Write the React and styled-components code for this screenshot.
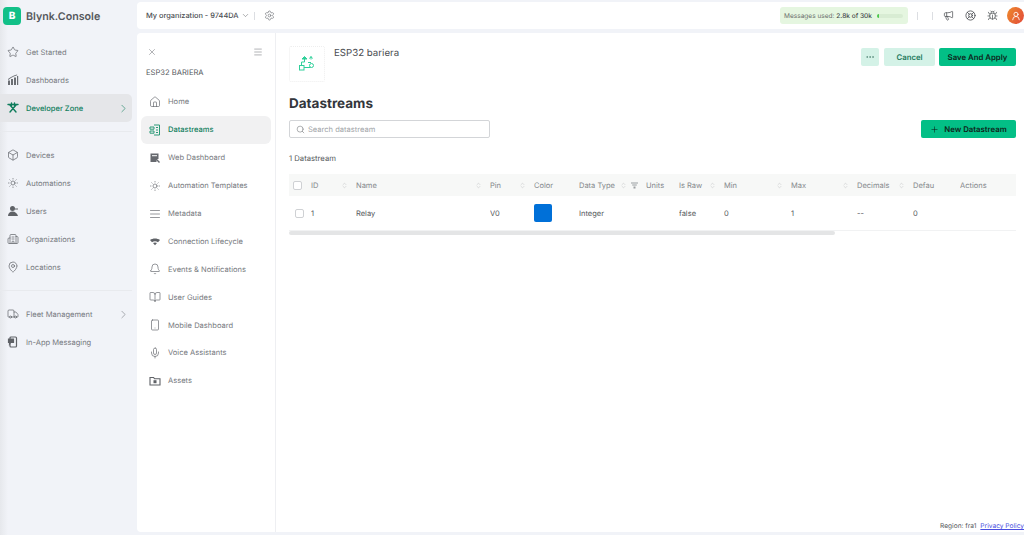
import React from 'react';
import styled, { createGlobalStyle } from 'styled-components';
import {
  Star, Box, SunMedium, Building2, MapPin, Truck, ChevronRight, ChevronDown, Settings, X, Menu, Home,
  Bell, BookOpen, Smartphone, Mic, Search, Plus, ChevronsUpDown, Megaphone, LifeBuoy,
  Bug, UserRound, AlignJustify, Ellipsis
} from 'lucide-react';

const GlobalStyle = createGlobalStyle`
  html, body { margin: 0; padding: 0; height: 100%; overflow: hidden; }
  body {
    font-family: Inter, "Liberation Sans", sans-serif;
    background: #f1f3f8;
    color: #3a3d42;
    text-rendering: geometricPrecision;
  }
  #root { height: 100%; }
  * { box-sizing: border-box; }
`;

const Shell = styled.div`
  display: flex;
  width: 1024px;
  height: 535px;
  background: linear-gradient(90deg, #e6e8ec 0, #f1f3f8 8px);
`;

const Sidebar = styled.aside`
  width: 137px;
  flex-shrink: 0;
  display: flex;
  flex-direction: column;
`;

const Brand = styled.div`
  height: 31px;
  display: flex;
  align-items: center;
  gap: 5px;
  padding-left: 3px;
  padding-top: 1px;
  font-size: 10.7px;
  font-weight: 600;
  color: #55585c;
`;

const Logo = styled.div`
  width: 18px;
  height: 18px;
  border-radius: 4px;
  background: #12c088;
  color: #fff;
  font-size: 10px;
  font-weight: 800;
  display: flex;
  align-items: center;
  justify-content: center;
`;

const SideList = styled.nav`
  display: flex;
  flex-direction: column;
  padding-top: 7px;
`;

const SideItem = styled.div`
  height: 28px;
  width: 132px;
  display: flex;
  align-items: center;
  gap: 7px;
  padding: 0 2px 0 7px;
  border-radius: 0 5px 5px 0;
  font-size: 7.55px;
  color: ${p => (p.$active ? '#0f7d5c' : '#777a80')};
  font-weight: ${p => (p.$active ? 500 : 400)};
  background: ${p => (p.$active ? '#e5e6e9' : 'transparent')};
  svg { flex-shrink: 0; }
  span { flex: 1; }
`;

const SideRule = styled.div`
  height: 1px;
  width: 132px;
  background: #e8eaee;
  margin: ${p => p.$margin};
`;

const Right = styled.div`
  flex: 1;
  min-width: 0;
  display: flex;
  flex-direction: column;
`;

const TopBar = styled.header`
  height: 27px;
  margin-top: 2px;
  background: #fff;
  border-radius: 4px 0 0 4px;
  display: flex;
  align-items: center;
  padding-left: 9px;
  font-size: 7.4px;
  color: #4b4e53;
`;

const OrgName = styled.div`
  display: flex;
  align-items: center;
  gap: 2px;
  font-weight: 500;
`;

const TopTick = styled.div`
  width: 1px;
  height: 8px;
  background: #dcdee2;
  margin: ${p => p.$margin};
`;

const Usage = styled.div`
  width: 128px;
  height: 17px;
  margin-left: auto;
  border-radius: 3px;
  background: #e5f6e0;
  display: flex;
  align-items: center;
  padding: 0 5px 0 4px;
  font-size: 6.55px;
  color: #6a6e6c;
  white-space: pre;
  b { font-weight: 500; color: #44474a; }
`;

const UsageTrack = styled.div`
  width: 26px;
  height: 4px;
  margin-left: auto;
  background: #d8ecd3;
  border-radius: 2px;
  overflow: hidden;
  i { display: block; height: 100%; background: #4cc94c; }
`;

const TopIcons = styled.div`
  display: flex;
  align-items: center;
  gap: 11px;
  margin-right: 9px;
  color: #4b4e52;
`;

const Avatar = styled.div`
  width: 17px;
  height: 17px;
  border-radius: 50%;
  background: linear-gradient(120deg, #ee8a2c, #e24a3a);
  color: #fff;
  display: flex;
  align-items: center;
  justify-content: center;
  margin-left: -2px;
  margin-right: -9px;
`;

const Panel = styled.div`
  height: 499px;
  margin-top: 4px;
  background: #fff;
  border-radius: 4px 0 0 4px;
  display: flex;
`;

const InnerNav = styled.nav`
  width: 139px;
  flex-shrink: 0;
  border-right: 1px solid #eeeff2;
  display: flex;
  flex-direction: column;
  padding: 14px 0 0 4px;
`;

const NavTools = styled.div`
  width: 125px;
  display: flex;
  justify-content: space-between;
  align-items: center;
  padding: 0 3px 0 6px;
  color: #66696e;
`;

const NavTitle = styled.div`
  font-size: 7.6px;
  color: #55585c;
  padding: 11px 0 10px 5px;
  line-height: 10px;
`;

const NavItem = styled.div`
  width: 130px;
  height: 27.9px;
  flex-shrink: 0;
  display: flex;
  align-items: center;
  gap: 7px;
  padding-left: 8px;
  border-radius: 6px;
  font-size: 7.55px;
  color: ${p => (p.$active ? '#0f7d5c' : '#777a80')};
  font-weight: ${p => (p.$active ? 500 : 400)};
  background: ${p => (p.$active ? '#f1f1f2' : 'transparent')};
`;

const Content = styled.main`
  flex: 1;
  min-width: 0;
  display: flex;
  flex-direction: column;
  padding: 13px 8px 0 13px;
`;

const ProductRow = styled.div`
  display: flex;
  align-items: flex-start;
  height: 36px;
`;

const ProductIcon = styled.div`
  width: 36px;
  height: 36px;
  border: 1px dotted #eeeeee;
  border-radius: 2px;
  color: #2fd09a;
  display: flex;
  align-items: center;
  justify-content: center;
`;

const ProductName = styled.div`
  margin-left: 9px;
  font-size: 9.7px;
  line-height: 16px;
  color: #4b4e53;
`;

const Actions = styled.div`
  margin-left: auto;
  margin-top: 2px;
  display: flex;
  gap: 5px;
`;

const Btn = styled.button`
  height: 18px;
  width: ${p => p.$w}px;
  margin-left: ${p => p.$ml || 0}px;
  border: none;
  border-radius: 2px;
  padding: 0;
  font: 600 7.8px Inter, sans-serif;
  text-rendering: geometricPrecision;
  display: flex;
  align-items: center;
  justify-content: center;
  gap: 5px;
  background: ${p => (p.$primary ? '#03bf86' : '#d4f2e7')};
  color: ${p => (p.$primary ? '#0e1f1a' : '#1e7a5d')};
`;

const Title = styled.h1`
  margin: 12px 0 0;
  font-size: 13.5px;
  line-height: 20px;
  font-weight: 700;
  color: #33363b;
`;

const SearchRow = styled.div`
  display: flex;
  justify-content: space-between;
  margin-top: 6px;
`;

const SearchBox = styled.div`
  width: 201px;
  height: 18px;
  border: 1px solid #d3d5d8;
  border-radius: 2px;
  display: flex;
  align-items: center;
  gap: 3px;
  padding-left: 6px;
  font-size: 7.55px;
  color: #a2a5a9;
  svg { color: #66696e; }
`;

const Count = styled.div`
  margin-top: 15px;
  font-size: 7.7px;
  line-height: 12px;
  color: #55585c;
`;

const Table = styled.div`
  margin-top: 9px;
  display: flex;
  flex-direction: column;
`;

const Row = styled.div`
  display: grid;
  grid-template-columns: 22px 45px 134px 44px 45px 67px 33px 45px 67px 66px 56px 47px 56px;
  align-items: center;
  height: ${p => (p.$head ? 22 : 35)}px;
  background: ${p => (p.$head ? '#f7f8f7' : '#fff')};
  color: ${p => (p.$head ? '#85888c' : '#55585c')};
  font-size: 7.5px;
  border-bottom: ${p => (p.$head ? 'none' : '1px solid #f1f2f3')};
`;

const Cell = styled.div`
  display: flex;
  align-items: center;
  justify-content: space-between;
  padding-right: 8px;
  white-space: nowrap;
  overflow: hidden;
`;

const HeadIcons = styled.span`
  display: flex;
  align-items: center;
  gap: 4px;
  color: #b5b7ba;
`;

const CheckCell = styled.div`
  padding-left: ${p => p.$pl}px;
`;

const Check = styled.div`
  width: 9px;
  height: 9px;
  border: 1px solid #cfd1d4;
  border-radius: 2px;
  background: #fff;
`;

const Swatch = styled.div`
  width: 18px;
  height: 18px;
  border-radius: 2px;
  background: #0070d8;
`;

const Scrollbar = styled.div`
  width: 546px;
  height: 4px;
  border-radius: 2px;
  background: #e4e5e6;
`;

const Footer = styled.footer`
  margin-top: auto;
  margin-right: -8px;
  margin-bottom: -1px;
  height: 13px;
  display: flex;
  justify-content: flex-end;
  gap: 4px;
  font-size: 6.6px;
  line-height: 12px;
  color: #55585c;
  white-space: nowrap;
  a { color: #4a4ee0; text-decoration: underline; }
`;

const Dashboards = () => (
  <svg width="12" height="12" viewBox="0 0 12 12" fill="#6b6e73">
    <path d="M1 11V6.5h2V11zM4 11V5h2v6zM7 11V3.5h2V11zM10 11V2h1.2v9zM1 5l3-2 3-1.5 3-1 .3.8-3 1-3 1.5-3 2.1z" />
  </svg>
);

const DevZone = () => (
  <svg width="12" height="12" viewBox="0 0 12 12" fill="none" stroke="#0f7d5c" strokeWidth="1.4" strokeLinecap="round">
    <path d="M1 2.5h10M2.5 2.5l6.5 7.5M9.5 2.5L3 10M4.5 1v3M7.5 1v3" />
  </svg>
);

const UsersIcon = () => (
  <svg width="12" height="12" viewBox="0 0 12 12" fill="#5f6267">
    <circle cx="5.5" cy="3.5" r="2.5" />
    <path d="M1 11c0-3 2-4.5 4.5-4.5S10 8 11 11z" />
    <path d="M8 3.5h3v1H8z" />
  </svg>
);

const Messaging = () => (
  <svg width="12" height="12" viewBox="0 0 12 12" fill="none" stroke="#5f6267" strokeWidth="1.2">
    <rect x="3" y="1" width="6.5" height="10" rx="1" />
    <path d="M1.5 3h5v3.5h-3L2.5 8V6.5h-1z" fill="#5f6267" />
  </svg>
);

const DataIcon = () => (
  <svg width="12" height="12" viewBox="0 0 12 12" fill="none" stroke="#2c9a78" strokeWidth="1">
    <path d="M5 1h5.5v10H5M1 3h4v2.2H1zM1 7h4v2.2H1zM7 3.5h2M7 6h2M7 8.5h2" />
  </svg>
);

const WebIcon = () => (
  <svg width="12" height="12" viewBox="0 0 12 12" fill="#66696e">
    <path d="M1.5 1.5h8V7H7.5v3h-6z" />
    <path d="M7 7l3.5 3.5" stroke="#66696e" strokeWidth="1.4" />
    <path d="M3 3.2h5v1H3z" fill="#fff" />
  </svg>
);

const WifiIcon = () => (
  <svg width="12" height="12" viewBox="0 0 12 12" fill="#5f6267">
    <path d="M1 5c2.8-2 7.2-2 10 0L9 7.2c-1.8-1.2-4.2-1.2-6 0z" />
    <path d="M4 8c1.2-.8 2.8-.8 4 0L6 10.2z" />
  </svg>
);

const AssetsIcon = () => (
  <svg width="12" height="12" viewBox="0 0 12 12" fill="none" stroke="#5f6267" strokeWidth="1.1">
    <path d="M1 2.5h3.5l1 1.2H11V10H1z" />
    <rect x="4.5" y="5.2" width="3" height="3" fill="#5f6267" stroke="none" />
  </svg>
);

const FilterIcon = () => (
  <svg width="7" height="7" viewBox="0 0 7 7" fill="#9a9da1">
    <path d="M0 .5h7v1H0zM1.2 2.5h4.6v1H1.2zM2.5 4.5h2v2h-2z" />
  </svg>
);

const ProductGlyph = () => (
  <svg width="18" height="18" viewBox="0 0 18 18" fill="none" stroke="currentColor" strokeWidth="1">
    <rect x="1.5" y="10.5" width="4.5" height="4.5" />
    <path d="M6.5 1.5L9 4H4z" fill="currentColor" />
    <path d="M6.5 4v3H3.5v3.5M6 12.5h6.5M10 7.5h3M13 1.5v3" />
    <circle cx="13.5" cy="10.5" r="2" />
    <path d="M11.5 3.5L13 1.5l1.5 2" />
  </svg>
);

const sideIcon = { size: 12, strokeWidth: 1.4, color: '#5f6267' };

const sideTop = [
  { label: 'Get Started', icon: <Star {...sideIcon} /> },
  { label: 'Dashboards', icon: <Dashboards /> },
  { label: 'Developer Zone', icon: <DevZone />, active: true, more: true },
];

const sideMid = [
  { label: 'Devices', icon: <Box {...sideIcon} /> },
  { label: 'Automations', icon: <SunMedium {...sideIcon} /> },
  { label: 'Users', icon: <UsersIcon /> },
  { label: 'Organizations', icon: <Building2 {...sideIcon} /> },
  { label: 'Locations', icon: <MapPin {...sideIcon} /> },
];

const sideBottom = [
  { label: 'Fleet Management', icon: <Truck {...sideIcon} />, more: true },
  { label: 'In-App Messaging', icon: <Messaging /> },
];

const navIcon = { size: 12, strokeWidth: 1.3, color: '#5f6267' };

const navItems = [
  { label: 'Home', icon: <Home {...navIcon} /> },
  { label: 'Datastreams', icon: <DataIcon />, active: true },
  { label: 'Web Dashboard', icon: <WebIcon /> },
  { label: 'Automation Templates', icon: <SunMedium {...navIcon} /> },
  { label: 'Metadata', icon: <AlignJustify {...navIcon} /> },
  { label: 'Connection Lifecycle', icon: <WifiIcon /> },
  { label: 'Events & Notifications', icon: <Bell {...navIcon} /> },
  { label: 'User Guides', icon: <BookOpen {...navIcon} /> },
  { label: 'Mobile Dashboard', icon: <Smartphone {...navIcon} /> },
  { label: 'Voice Assistants', icon: <Mic {...navIcon} /> },
  { label: 'Assets', icon: <AssetsIcon /> },
];

const columns = [
  { label: 'ID', sort: true },
  { label: 'Name', sort: true },
  { label: 'Pin', sort: true },
  { label: 'Color' },
  { label: 'Data Type', sort: true, filter: true },
  { label: 'Units' },
  { label: 'Is Raw', sort: true },
  { label: 'Min', sort: true },
  { label: 'Max', sort: true },
  { label: 'Decimals', sort: true },
  { label: 'Defau' },
  { label: 'Actions' },
];

const SideRow = ({ item }) => (
  <SideItem $active={item.active}>
    {item.icon}
    <span>{item.label}</span>
    {item.more && <ChevronRight size={13} strokeWidth={1.1} />}
  </SideItem>
);

export default function App() {
  return (
    <Shell>
      <GlobalStyle />
      <Sidebar>
        <Brand>
          <Logo>B</Logo>
          Blynk.Console
        </Brand>
        <SideList>
          {sideTop.map(item => <SideRow key={item.label} item={item} />)}
          <SideRule $margin="9px 0 9px" />
          {sideMid.map(item => <SideRow key={item.label} item={item} />)}
          <SideRule $margin="9px 0 9px" />
          {sideBottom.map(item => <SideRow key={item.label} item={item} />)}
        </SideList>
      </Sidebar>

      <Right>
        <TopBar>
          <OrgName>
            My organization - 9744DA
            <ChevronDown size={9} strokeWidth={1.2} />
          </OrgName>
          <TopTick $margin="0 9px 0 4px" />
          <Settings size={11} strokeWidth={1.3} color="#66696e" />
          <Usage>
            Messages used: <b>2.8k of 30k</b>
            <UsageTrack><i style={{ width: `${(2.8 / 30) * 100}%` }} /></UsageTrack>
          </Usage>
          <TopTick $margin="0 14px 0 9px" />
          <TopTick $margin="0 10px 0 0" />
          <TopIcons>
            <Megaphone size={11} strokeWidth={1.6} />
            <LifeBuoy size={11} strokeWidth={1.8} />
            <Bug size={11} strokeWidth={1.5} />
            <Avatar><UserRound size={10} strokeWidth={2} /></Avatar>
          </TopIcons>
        </TopBar>

        <Panel>
          <InnerNav>
            <NavTools>
              <X size={10} strokeWidth={1.2} />
              <Menu size={10} strokeWidth={1.2} />
            </NavTools>
            <NavTitle>ESP32 BARIERA</NavTitle>
            {navItems.map(item => (
              <NavItem key={item.label} $active={item.active}>
                {item.icon}
                {item.label}
              </NavItem>
            ))}
          </InnerNav>

          <Content>
            <ProductRow>
              <ProductIcon><ProductGlyph /></ProductIcon>
              <ProductName>ESP32 bariera</ProductName>
              <Actions>
                <Btn $w={18}><Ellipsis size={10} strokeWidth={2} color="#5a8c7c" /></Btn>
                <Btn $w={51}>Cancel</Btn>
                <Btn $w={77} $primary $ml={-1}>Save And Apply</Btn>
              </Actions>
            </ProductRow>

            <Title>Datastreams</Title>

            <SearchRow>
              <SearchBox>
                <Search size={9} strokeWidth={1.4} />
                Search datastream
              </SearchBox>
              <Btn $w={95} $primary>
                <Plus size={9} strokeWidth={1.5} />
                New Datastream
              </Btn>
            </SearchRow>

            <Count>1 Datastream</Count>

            <Table>
              <Row $head>
                <CheckCell $pl={4}><Check /></CheckCell>
                {columns.map(col => (
                  <Cell key={col.label}>
                    {col.label}
                    <HeadIcons>
                      {col.sort && <ChevronsUpDown size={7} strokeWidth={1.5} />}
                      {col.filter && <FilterIcon />}
                    </HeadIcons>
                  </Cell>
                ))}
              </Row>
              <Row>
                <CheckCell $pl={6}><Check /></CheckCell>
                <Cell>1</Cell>
                <Cell>Relay</Cell>
                <Cell>V0</Cell>
                <Cell><Swatch /></Cell>
                <Cell>Integer</Cell>
                <Cell />
                <Cell>false</Cell>
                <Cell>0</Cell>
                <Cell>1</Cell>
                <Cell>--</Cell>
                <Cell>0</Cell>
                <Cell />
              </Row>
              <Scrollbar />
            </Table>

            <Footer>
              Region: fra1
              <a href="#privacy">Privacy Policy</a>
            </Footer>
          </Content>
        </Panel>
      </Right>
    </Shell>
  );
}
